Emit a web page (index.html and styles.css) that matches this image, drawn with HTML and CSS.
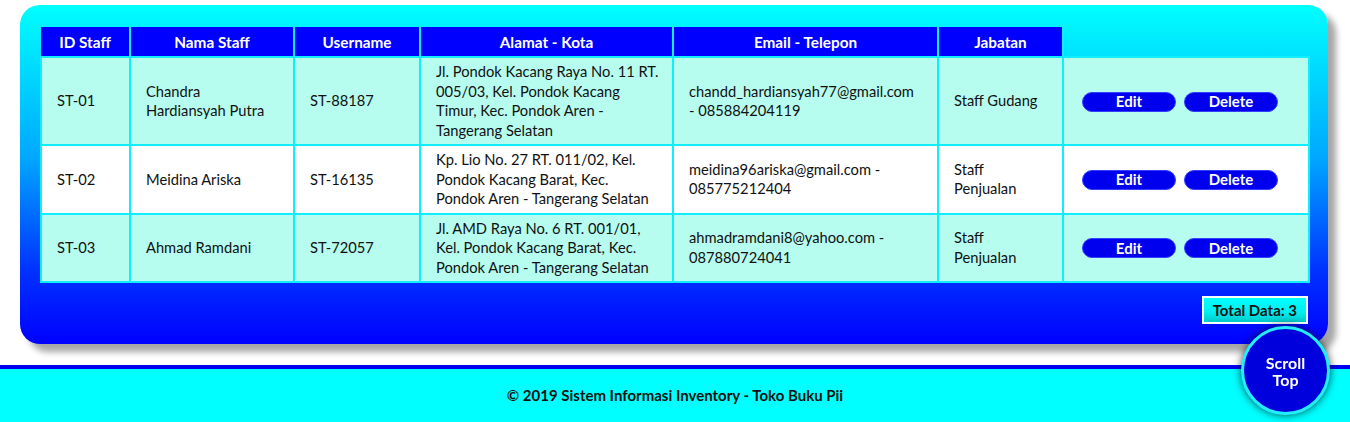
FILE: index.html
```html
<!DOCTYPE html>
<html lang="id">
<head>
<meta charset="utf-8">
<title>Data Staff</title>
<link rel="stylesheet" href="styles.css">
</head>
<body>
<main class="page">
  <section class="panel">
    <table class="staff">
      <colgroup>
        <col class="c1"><col class="c2"><col class="c3"><col class="c4"><col class="c5"><col class="c6"><col class="c7">
      </colgroup>
      <thead>
        <tr>
          <th>ID Staff</th>
          <th>Nama Staff</th>
          <th>Username</th>
          <th>Alamat - Kota</th>
          <th>Email - Telepon</th>
          <th>Jabatan</th>
          <th class="blank"></th>
        </tr>
      </thead>
      <tbody>
        <tr class="odd">
          <td>ST-01</td>
          <td>Chandra<br>Hardiansyah Putra</td>
          <td>ST-88187</td>
          <td>Jl. Pondok Kacang Raya No. 11 RT.<br>005/03, Kel. Pondok Kacang<br>Timur, Kec. Pondok Aren -<br>Tangerang Selatan</td>
          <td>chandd_hardiansyah77@gmail.com<br>- 085884204119</td>
          <td>Staff Gudang</td>
          <td class="actions"><button class="btn">Edit</button><button class="btn">Delete</button></td>
        </tr>
        <tr class="even">
          <td>ST-02</td>
          <td>Meidina Ariska</td>
          <td>ST-16135</td>
          <td>Kp. Lio No. 27 RT. 011/02, Kel.<br>Pondok Kacang Barat, Kec.<br>Pondok Aren - Tangerang Selatan</td>
          <td>meidina96ariska@gmail.com -<br>085775212404</td>
          <td>Staff<br>Penjualan</td>
          <td class="actions"><button class="btn">Edit</button><button class="btn">Delete</button></td>
        </tr>
        <tr class="odd">
          <td>ST-03</td>
          <td>Ahmad Ramdani</td>
          <td>ST-72057</td>
          <td>Jl. AMD Raya No. 6 RT. 001/01,<br>Kel. Pondok Kacang Barat, Kec.<br>Pondok Aren - Tangerang Selatan</td>
          <td>ahmadramdani8@yahoo.com -<br>087880724041</td>
          <td>Staff<br>Penjualan</td>
          <td class="actions"><button class="btn">Edit</button><button class="btn">Delete</button></td>
        </tr>
      </tbody>
    </table>
    <div class="total-row"><span class="total">Total Data: 3</span></div>
  </section>
</main>
<footer class="footer">© 2019 Sistem Informasi Inventory - Toko Buku Pii</footer>
<a class="scroll-top" href="#">Scroll<br>Top</a>
</body>
</html>
```

FILE: styles.css
```css
html, body {
  margin: 0;
  padding: 0;
  background: #fff;
}
body {
  font-family: "Lato", "Open Sans", "Liberation Sans", sans-serif;
  font-size: 14.7px;
  color: #111;
}
.page {
  padding: 5px 22px 0 20px;
}
.panel {
  background: linear-gradient(to bottom, #00ffff 0%, #00a8ff 45%, #0033ff 78%, #0000ff 100%);
  border-radius: 20px;
  padding: 22px 20px 20px 20px;
  box-shadow: 8px 8px 6px rgba(0, 0, 0, 0.35);
}
.staff {
  width: 1268px;
  border-collapse: collapse;
  table-layout: fixed;
}
.c1 { width: 89px; }
.c2 { width: 164px; }
.c3 { width: 126px; }
.c4 { width: 253px; }
.c5 { width: 265px; }
.c6 { width: 125px; }
.c7 { width: 246px; }
.staff th {
  background: #0000ff;
  color: #fff;
  font-weight: 700;
  font-size: 15.3px;
  height: 29px;
  padding: 0;
  border-left: 2px solid #11eeff;
  border-right: 2px solid #11eeff;
  text-align: center;
}
.staff th:first-child { border-left: none; }
.staff th.blank {
  background: transparent;
  border: none;
}
.staff td {
  border: 2px solid #11eeff;
  padding: 4px 4px 4px 15px;
  line-height: 19.5px;
  vertical-align: middle;
  text-align: left;
  white-space: nowrap;
}
.staff tr.odd td { background: #b6fdf0; }
.staff tr.even td { background: #ffffff; }
.staff td.actions {
  padding-left: 18px;
}
.btn {
  display: inline-block;
  width: 94px;
  height: 20px;
  margin-right: 8px;
  border-radius: 10px;
  border: 1px solid #3340ff;
  background: #0000ee;
  color: #fff;
  font-family: inherit;
  font-size: 15px;
  font-weight: 700;
  line-height: 17px;
  padding: 0;
  vertical-align: middle;
}
.total-row {
  display: flex;
  justify-content: flex-end;
  margin-top: 13px;
}
.total {
  display: inline-block;
  border: 2px solid #f4ffff;
  background: linear-gradient(to bottom, #00ffff 0%, #00eeee 60%, #00c8c8 100%);
  color: #111;
  font-weight: 700;
  font-size: 15px;
  padding: 4px 9px;
  line-height: 16px;
}
.footer {
  margin-top: 21px;
  border-top: 4px solid #0000ee;
  background: #00ffff;
  height: 53px;
  line-height: 53px;
  text-align: center;
  font-weight: 700;
  font-size: 15px;
  color: #111;
}
.scroll-top {
  position: fixed;
  right: 20px;
  bottom: 7px;
  width: 83px;
  height: 83px;
  border-radius: 50%;
  border: 3px solid #22eeff;
  background: #0000dd;
  color: #fff;
  font-weight: 700;
  font-size: 16px;
  line-height: 17px;
  text-decoration: none;
  display: flex;
  align-items: center;
  justify-content: center;
  text-align: center;
  box-shadow: 0 0 8px rgba(0, 0, 0, 0.7);
}
```
